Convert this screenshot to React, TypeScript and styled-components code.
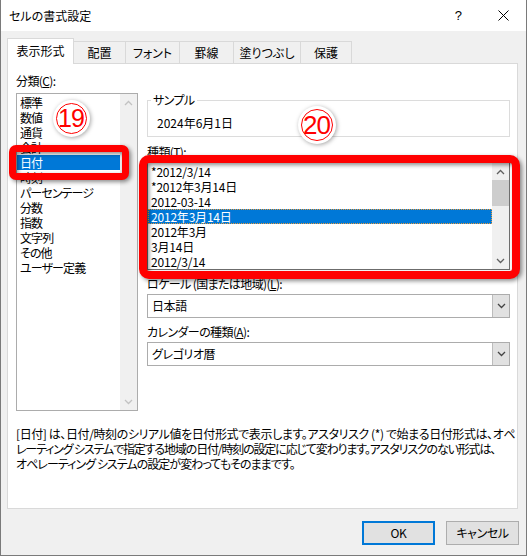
import * as React from 'react'
import styled, { createGlobalStyle } from 'styled-components'

const GlobalStyle = createGlobalStyle`
  html, body { margin: 0; padding: 0; background: #fff; }
  body {
    font-family: "Noto Sans CJK JP", "Noto Sans", sans-serif;
    font-size: 12px;
    color: #000;
    font-feature-settings: "palt";
  }
  * { box-sizing: border-box; }
`

const Window = styled.div`
  position: relative;
  width: 527px;
  height: 556px;
  background: #f0f0f0;
  border: 1px solid #7a7a7a;
  border-top: none;
  display: flex;
  flex-direction: column;
`

const TitleBar = styled.div`
  height: 31px;
  background: #fff;
  display: flex;
  align-items: center;
  padding: 0 17px 0 8px;
  flex-shrink: 0;
`

const Title = styled.span`
  font-size: 12px;
  line-height: 14px;
`

const TitleButtons = styled.div`
  margin-left: auto;
  display: flex;
  align-items: center;
  gap: 36px;
`

const HelpMark = styled.span`
  font-family: "Liberation Sans", sans-serif;
  font-size: 13px;
  line-height: 14px;
`

const Body = styled.div`
  padding: 7px 7px 0 6px;
  display: flex;
  flex-direction: column;
`

const TabStrip = styled.div`
  display: flex;
  align-items: flex-end;
  height: 25px;
`

const Tab = styled.div<{ $w: number; $active?: boolean }>`
  position: relative;
  width: ${p => p.$w}px;
  height: ${p => (p.$active ? 26 : 22)}px;
  margin-bottom: ${p => (p.$active ? -1 : 0)}px;
  margin-left: -1px;
  z-index: ${p => (p.$active ? 2 : 1)};
  background: ${p => (p.$active ? '#fff' : '#f0f0f0')};
  border: 1px solid #d9d9d9;
  border-bottom: none;
  display: flex;
  align-items: center;
  justify-content: center;
  padding-bottom: ${p => (p.$active ? 2 : 0)}px;
  line-height: 14px;
  &:first-child { margin-left: 0; }
`

const Panel = styled.div`
  width: 511px;
  height: 446px;
  background: #fff;
  border: 1px solid #d9d9d9;
  padding: 9px 7px 0 8px;
`

const Columns = styled.div`
  display: flex;
  gap: 9px;
`

const LeftCol = styled.div`
  width: 122px;
  display: flex;
  flex-direction: column;
`

const RightCol = styled.div`
  position: relative;
  width: 363px;
  display: flex;
  flex-direction: column;
  padding-top: 20px;
`

const Label = styled.div<{ $gap?: number }>`
  line-height: 15px;
  height: 15px;
  margin-top: ${p => p.$gap ?? 0}px;
  white-space: nowrap;
  letter-spacing: -0.6px;
`

const ListBox = styled.div<{ $h: number; $dark?: boolean }>`
  position: relative;
  height: ${p => p.$h}px;
  border: 1px solid ${p => (p.$dark ? '#6f6f6f' : '#acacac')};
  background: #fff;
  display: flex;
`

const Rows = styled.div`
  flex: 1;
  padding-top: 1px;
  display: flex;
  flex-direction: column;
`

const Row = styled.div<{ $selected?: boolean; $focus?: boolean; $tight?: boolean }>`
  height: 15px;
  line-height: 15px;
  padding-left: 3px;
  white-space: nowrap;
  overflow: hidden;
  letter-spacing: ${p => (p.$tight ? -0.9 : -0.2)}px;
  background: ${p => (p.$selected ? '#0078d7' : 'transparent')};
  color: ${p => (p.$selected ? '#fff' : '#000')};
  outline: ${p => (p.$focus ? '1px dotted #e89a3c' : 'none')};
  outline-offset: -1px;
`

const ScrollBar = styled.div`
  width: 17px;
  background: #f0f0f0;
  display: flex;
  flex-direction: column;
  align-items: stretch;
`

const ScrollArrow = styled.div`
  height: 17px;
  display: flex;
  align-items: center;
  justify-content: center;
`

const ScrollTrack = styled.div`
  flex: 1;
  display: flex;
  flex-direction: column;
`

const Thumb = styled.div<{ $h: number }>`
  height: ${p => p.$h}px;
  background: #cdcdcd;
`

const SampleBox = styled.fieldset`
  margin: 0;
  border: 1px solid #dcdcdc;
  padding: 9px 9px 6px 9px;
  min-width: 0;
`

const Legend = styled.legend`
  margin-left: -6px;
  padding: 0 2px;
  line-height: 14px;
  font-size: 12px;
  letter-spacing: -0.6px;
`

const SampleValue = styled.div`
  line-height: 14px;
`

const Combo = styled.div`
  height: 24px;
  margin-top: 3px;
  border: 1px solid #acacac;
  background: #fff;
  display: flex;
`

const ComboValue = styled.div`
  flex: 1;
  padding-left: 4px;
  line-height: 22px;
  letter-spacing: -0.4px;
`

const ComboButton = styled.div`
  width: 17px;
  background: #e1e1e1;
  border-left: 1px solid #bcbcbc;
  display: flex;
  align-items: center;
  justify-content: center;
`

const Description = styled.div`
  margin-top: 15px;
  line-height: 15px;
`

const DescLine = styled.div<{ $ls: number }>`
  white-space: nowrap;
  letter-spacing: ${p => p.$ls}px;
`

const Footer = styled.div`
  display: flex;
  justify-content: flex-end;
  gap: 11px;
  margin-top: 12px;
`

const Button = styled.div<{ $default?: boolean }>`
  width: 73px;
  height: 24px;
  background: #e1e1e1;
  border: ${p => (p.$default ? '2px solid #0078d7' : '1px solid #adadad')};
  display: flex;
  align-items: center;
  justify-content: center;
  line-height: 14px;
  letter-spacing: -0.4px;
`

const Highlight = styled.div<{ $t: number; $l: number; $w: number; $h: number; $b: number; $r: number }>`
  position: absolute;
  top: ${p => p.$t}px;
  left: ${p => p.$l}px;
  width: ${p => p.$w}px;
  height: ${p => p.$h}px;
  border: ${p => p.$b}px solid #ff0000;
  border-radius: ${p => p.$r}px;
  filter: drop-shadow(2px 2px 2px rgba(0, 0, 0, 0.45));
  pointer-events: none;
  z-index: 5;
`

const Marker = styled.div<{ $t: number; $l: number; $d: number }>`
  position: absolute;
  top: ${p => p.$t}px;
  left: ${p => p.$l}px;
  width: ${p => p.$d}px;
  height: ${p => p.$d}px;
  border-radius: 50%;
  background: #fff;
  box-shadow: 1px 1px 4px rgba(0, 0, 0, 0.35);
  display: flex;
  align-items: center;
  justify-content: center;
  z-index: 6;
`

const MarkerRing = styled.div<{ $d: number }>`
  width: ${p => p.$d}px;
  height: ${p => p.$d}px;
  border: 1.5px solid #ff0000;
  border-radius: 50%;
  display: flex;
  align-items: center;
  justify-content: center;
  color: #ff0000;
  font-family: "Liberation Sans Narrow", "Liberation Sans", sans-serif;
  font-size: ${p => Math.round(p.$d * 0.8)}px;
  letter-spacing: -1px;
  padding-right: 1px;
  line-height: 1;
`

const Chevron = ({ up, color }: { up?: boolean; color: string }) => (
  <svg width="9" height="6" viewBox="0 0 9 6">
    <path d={up ? 'M1 5 L4.5 1.5 L8 5' : 'M1 1 L4.5 4.5 L8 1'} fill="none" stroke={color} strokeWidth="1.3" />
  </svg>
)

const CloseIcon = () => (
  <svg width="11" height="11" viewBox="0 0 11 11">
    <path d="M0.5 0.5 L10.5 10.5 M10.5 0.5 L0.5 10.5" stroke="#000" strokeWidth="1" />
  </svg>
)

const tabs = [
  { label: '表示形式', w: 67, active: true },
  { label: '配置', w: 53 },
  { label: 'フォント', w: 55 },
  { label: '罫線', w: 55 },
  { label: '塗りつぶし', w: 68 },
  { label: '保護', w: 52 },
]

const categories = ['標準', '数値', '通貨', '会計', '日付', '時刻', 'パーセンテージ', '分数', '指数', '文字列', 'その他', 'ユーザー定義']

const types = ['*2012/3/14', '*2012年3月14日', '2012-03-14', '2012年3月14日', '2012年3月', '3月14日', '2012/3/14']

const description = [
  { text: '[日付] は、日付/時刻のシリアル値を日付形式で表示します。アスタリスク (*) で始まる日付形式は、オペ', ls: -0.4 },
  { text: 'レーティング システムで指定する地域の日付/時刻の設定に応じて変わります。アスタリスクのない形式は、', ls: -1.15 },
  { text: 'オペレーティング システムの設定が変わってもそのままです。', ls: -0.95 },
]

export default function App() {
  return (
    <>
      <GlobalStyle />
      <Window>
        <TitleBar>
          <Title>セルの書式設定</Title>
          <TitleButtons>
            <HelpMark>?</HelpMark>
            <CloseIcon />
          </TitleButtons>
        </TitleBar>
        <Body>
          <TabStrip>
            {tabs.map(t => (
              <Tab key={t.label} $w={t.w} $active={t.active}>{t.label}</Tab>
            ))}
          </TabStrip>
          <Panel>
            <Columns>
              <LeftCol>
                <Label>分類(<u>C</u>):</Label>
                <ListBox $h={318} style={{ marginTop: 5 }}>
                  <Rows>
                    {categories.map((c, i) => (
                      <Row key={c} $tight $selected={i === 4}>{c}</Row>
                    ))}
                  </Rows>
                  <ScrollBar>
                    <ScrollArrow><Chevron up color="#c2c2c2" /></ScrollArrow>
                    <ScrollTrack />
                    <ScrollArrow><Chevron color="#c2c2c2" /></ScrollArrow>
                  </ScrollBar>
                  <Highlight $t={51} $l={-8} $w={120} $h={35} $b={7} $r={7} />
                  <Marker $t={6} $l={36} $d={37}>
                    <MarkerRing $d={31}>19</MarkerRing>
                  </Marker>
                </ListBox>
              </LeftCol>
              <RightCol>
                <SampleBox>
                  <Legend>サンプル</Legend>
                  <SampleValue>2024年6月1日</SampleValue>
                </SampleBox>
                <Label $gap={7}>種類(<u>T</u>):</Label>
                <ListBox $h={108} $dark style={{ marginTop: 3 }}>
                  <Rows>
                    {types.map((t, i) => (
                      <Row key={t + i} $selected={i === 3} $focus={i === 3}>{t}</Row>
                    ))}
                  </Rows>
                  <ScrollBar>
                    <ScrollArrow><Chevron up color="#606060" /></ScrollArrow>
                    <ScrollTrack>
                      <Thumb $h={26} />
                    </ScrollTrack>
                    <ScrollArrow><Chevron color="#606060" /></ScrollArrow>
                  </ScrollBar>
                  <Highlight $t={-8} $l={-9} $w={381} $h={124} $b={8} $r={10} />
                </ListBox>
                <Label $gap={6}>ロケール (国または地域)(<u>L</u>):</Label>
                <Combo>
                  <ComboValue>日本語</ComboValue>
                  <ComboButton><Chevron color="#444" /></ComboButton>
                </Combo>
                <Label $gap={6}>カレンダーの種類(<u>A</u>):</Label>
                <Combo>
                  <ComboValue>グレゴリオ暦</ComboValue>
                  <ComboButton><Chevron color="#444" /></ComboButton>
                </Combo>
                <Marker $t={33} $l={151} $d={38}>
                  <MarkerRing $d={32}>20</MarkerRing>
                </Marker>
              </RightCol>
            </Columns>
            <Description>
              {description.map(d => (
                <DescLine key={d.text} $ls={d.ls}>{d.text}</DescLine>
              ))}
            </Description>
          </Panel>
          <Footer>
            <Button $default>OK</Button>
            <Button>キャンセル</Button>
          </Footer>
        </Body>
      </Window>
    </>
  )
}
